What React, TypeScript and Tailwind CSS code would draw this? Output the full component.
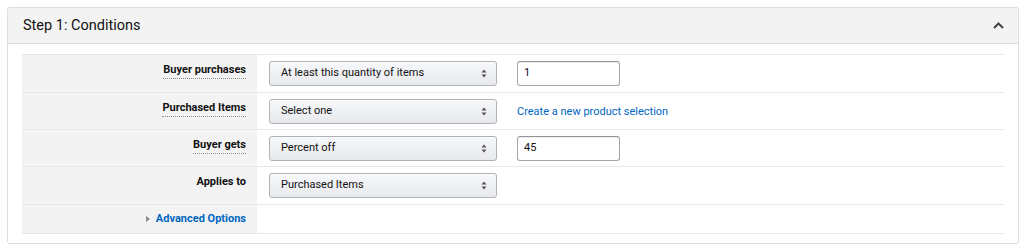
import React from 'react'

const font = { fontFamily: 'Roboto, "Liberation Sans", sans-serif' }

function Select({ value }: { value: string }) {
  return (
    <div className="flex items-center justify-between w-[228px] h-[25px] pl-[11px] pr-[9px] rounded-[3px] border border-[#adb1b8] bg-gradient-to-b from-[#f7f8fa] to-[#e7e9ec] shadow-[0_1px_0_rgba(255,255,255,0.6)_inset] text-[11px] text-[#111]">
      <span>{value}</span>
      <svg width="6" height="9" viewBox="0 0 6 9">
        <path d="M3 0.5 L5.5 3.5 H0.5 Z" fill="#555" />
        <path d="M3 8.5 L5.5 5.5 H0.5 Z" fill="#555" />
      </svg>
    </div>
  )
}

function TextInput({ value }: { value: string }) {
  return (
    <div className="flex items-center w-[103px] h-[25px] px-[6px] rounded-[3px] border border-[#a6a6a6] border-t-[#949494] bg-white shadow-[0_1px_0_rgba(0,0,0,0.07)_inset] text-[11px] text-[#111]">
      {value}
    </div>
  )
}

function Row({ label, underline = true, h, children }: { label: React.ReactNode; underline?: boolean; h: string; children?: React.ReactNode }) {
  return (
    <div className={`flex border-b border-[#e7e7e7] ${h}`}>
      <div className="w-[235px] bg-[#f3f3f3] flex justify-end items-start pr-[11px] pt-[7px]">
        {typeof label === 'string' ? (
          <span className={`text-[11px] font-bold text-[#111] leading-[16px] ${underline ? 'border-b border-dotted border-[#888]' : ''}`}>{label}</span>
        ) : label}
      </div>
      <div className="flex-1 flex items-start gap-[20px] pl-[12px] pt-[6px]">{children}</div>
    </div>
  )
}

export default function App() {
  return (
    <div className="w-[1030px] h-[249px] bg-white pt-[7px] pl-[7px]" style={font}>
      <div className="w-[1012px] h-[237px] border border-[#dddddd] rounded-[3px] bg-white">
        {/* Header */}
        <div className="flex items-center justify-between h-[36px] px-[15px] bg-[#f3f3f3] border-b border-[#dddddd]">
          <span className="text-[14.5px] text-[#111]">Step 1: Conditions</span>
          <svg width="11" height="7" viewBox="0 0 11 7" className="mr-[-1px]">
            <path d="M1 6 L5.5 1.5 L10 6" stroke="#444" strokeWidth="2" fill="none" />
          </svg>
        </div>

        {/* Conditions table */}
        <div className="mx-[14px] mt-[10px] border-t border-[#e7e7e7]">
          <Row label="Buyer purchases" h="h-[38px]">
            <Select value="At least this quantity of items" />
            <TextInput value="1" />
          </Row>
          <Row label="Purchased Items" h="h-[37px]">
            <Select value="Select one" />
            <a className="text-[11px] text-[#0066c0] leading-[25px] cursor-pointer">Create a new product selection</a>
          </Row>
          <Row label="Buyer gets" h="h-[37px]">
            <Select value="Percent off" />
            <TextInput value="45" />
          </Row>
          <Row label="Applies to" underline={false} h="h-[38px]">
            <Select value="Purchased Items" />
          </Row>
          <div className="flex h-[29px] border-b border-[#e7e7e7]">
            <div className="w-[235px] bg-[#f3f3f3] flex justify-end items-center pr-[11px]">
              <span className="flex items-center gap-[6px] text-[11px] font-bold text-[#0066c0] leading-[16px]">
                <svg width="4" height="6" viewBox="0 0 4 6">
                  <path d="M0 0 L4 3 L0 6 Z" fill="#888" />
                </svg>
                Advanced Options
              </span>
            </div>
            <div className="flex-1" />
          </div>
        </div>
      </div>
    </div>
  )
}
